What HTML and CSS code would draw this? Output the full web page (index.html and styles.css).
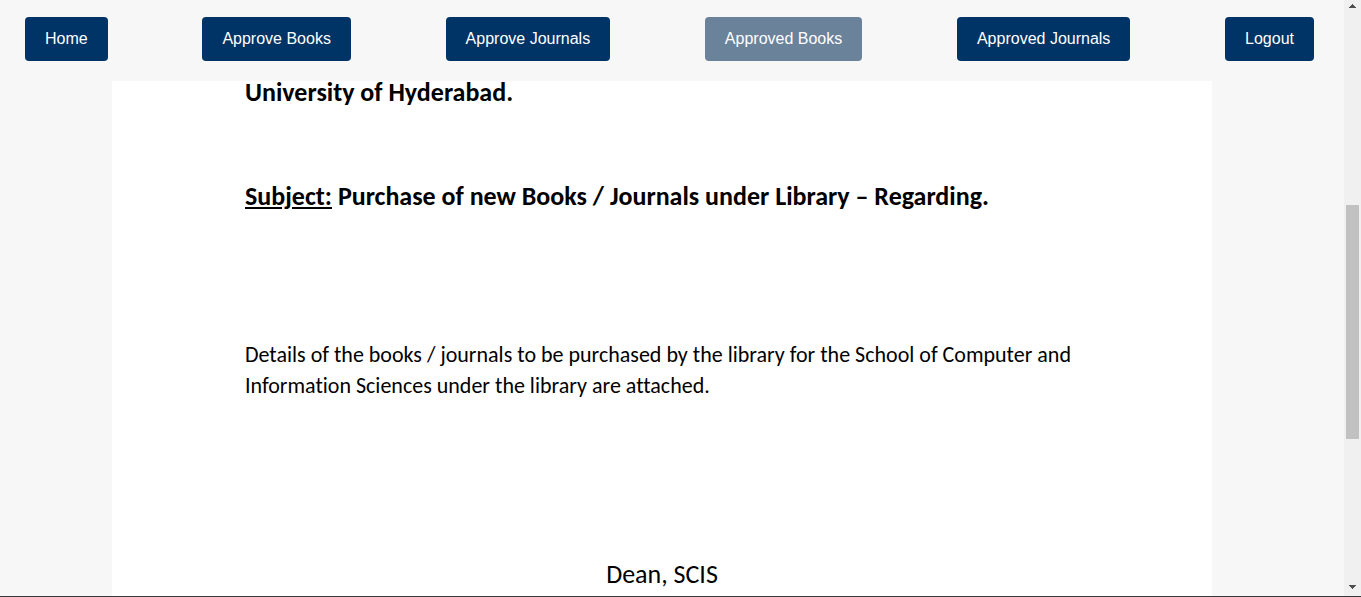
FILE: index.html
```
<!DOCTYPE html>
<html lang="en">
<head>
<meta charset="utf-8">
<title>Approved Books</title>
<link rel="stylesheet" href="styles.css">
</head>
<body>
<div class="view">
  <div class="content">
    <nav class="nav">
      <button class="nav-button" type="button">Home</button>
      <button class="nav-button" type="button">Approve Books</button>
      <button class="nav-button" type="button">Approve Journals</button>
      <button class="nav-button nav-button-current" type="button">Approved Books</button>
      <button class="nav-button" type="button">Approved Journals</button>
      <button class="nav-button" type="button">Logout</button>
    </nav>
    <main class="page">
      <article class="letter">
        <p class="heading">University of Hyderabad.</p>
        <p class="heading subject"><u>Subject:</u> Purchase of new Books / Journals under Library – Regarding.</p>
        <p class="details">Details of the books / journals to be purchased by the library for the School of Computer and Information Sciences under the library are attached.</p>
        <p class="signature">Dean, SCIS</p>
      </article>
    </main>
  </div>
  <div class="scrollbar" aria-hidden="true">
    <svg class="arrow" viewBox="0 0 7 4" shape-rendering="crispEdges"><path d="M3 0h1v1h1v1h1v1h1v1H0V3h1V2h1V1h1z"/></svg>
    <div class="track"><div class="thumb"></div></div>
    <svg class="arrow" viewBox="0 0 7 4" shape-rendering="crispEdges"><path d="M0 0h7v1H6v1H5v1H4v1H3V3H2V2H1V1H0z"/></svg>
  </div>
</div>
</body>
</html>
```
FILE: styles.css
```
* { box-sizing: border-box; }
body { margin: 0; background: #f7f7f7; }
.view {
  display: flex;
  height: 100vh;
  overflow: hidden;
  border-bottom: 1px solid #38383a;
}
.content {
  flex: 1;
  min-width: 0;
  display: flex;
  flex-direction: column;
}
.nav {
  display: flex;
  justify-content: space-between;
  padding: 17px 30px 20px 25px;
}
.nav-button {
  height: 44px;
  padding: 0 20px;
  border: 0;
  border-radius: 4px;
  background: #003366;
  color: #fff;
  font: 16px "Liberation Sans", Arial, sans-serif;
  white-space: nowrap;
  cursor: pointer;
}
.nav-button-current { background: #6b829b; }
.page {
  flex: 1;
  min-height: 0;
  display: flex;
  justify-content: center;
  padding-right: 20px;
}
.letter {
  width: 100%;
  max-width: 1100px;
  padding: 0 133px;
  background: #fff;
  color: #000;
  font-family: Calibri, Carlito, "Open Sans", sans-serif;
  font-variant-ligatures: none;
}
.letter p { margin: 0; }
.letter .heading {
  font-size: 26px;
  line-height: 22px;
  font-weight: 700;
  white-space: nowrap;
}
.letter .subject { margin-top: 82px; }
.letter u { text-decoration-thickness: 2px; text-underline-offset: 2px; }
.letter .details {
  margin-top: 132px;
  font-size: 22px;
  line-height: 31px;
}
.letter .signature {
  margin-top: 158px;
  font-size: 26px;
  line-height: 30px;
  text-align: center;
}
.scrollbar {
  flex: none;
  width: 17px;
  display: flex;
  flex-direction: column;
  align-items: center;
  padding: 4px 0 7px;
  background: #f0f0f0;
}
.arrow { width: 7px; height: 4px; fill: #505050; }
.track { flex: 1; width: 13px; padding-top: 197px; }
.thumb { height: 234px; background: #c1c1c1; }
```
